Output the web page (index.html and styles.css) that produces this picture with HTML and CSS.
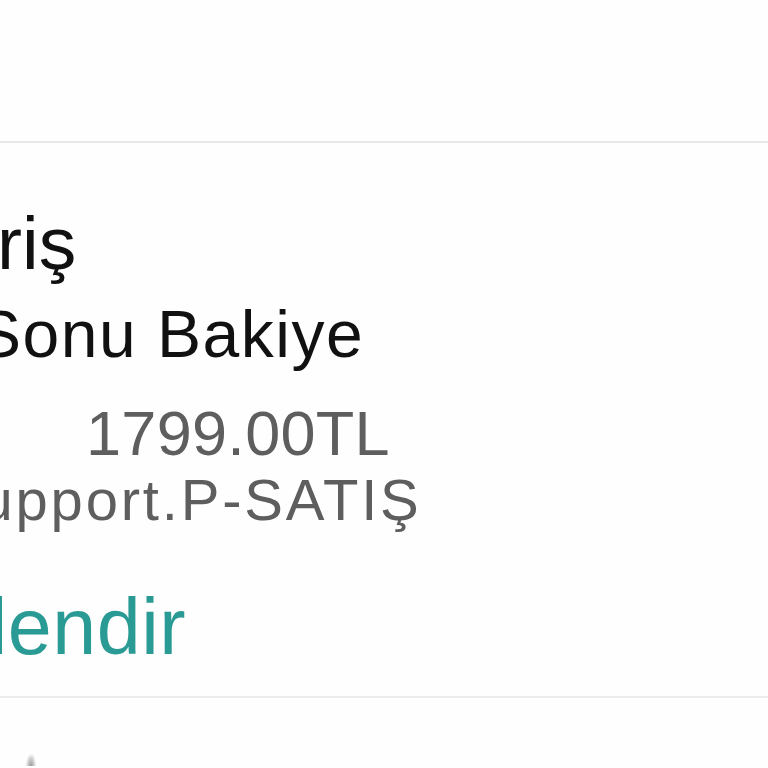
FILE: index.html
```html
<!DOCTYPE html>
<html lang="tr">
<head>
<meta charset="utf-8">
<link rel="stylesheet" href="styles.css">
</head>
<body>
<div class="screen">
  <div class="header"></div>
  <div class="card">
    <div class="title">Giriş</div>
    <div class="label">Dönem Sonu Bakiye</div>
    <div class="value">1799.00TL</div>
    <div class="meta">Support.P-SATIŞ</div>
    <div class="link">Bilgilendir</div>
  </div>
  <div class="next">
    <span class="peek"></span>
  </div>
</div>
</body>
</html>
```
FILE: styles.css
```css
html, body {
  margin: 0;
  padding: 0;
  background: #fefefe;
}
body {
  width: 768px;
  height: 768px;
  overflow: hidden;
  font-family: "Liberation Sans", Arial, sans-serif;
}
.screen {
  width: 768px;
  overflow: hidden;
}
.header {
  height: 141px;
  border-bottom: 2px solid #e8e8e8;
}
.card {
  padding-top: 51px;
  padding-bottom: 24px;
  border-bottom: 2px solid #ececec;
  white-space: nowrap;
}
.title {
  font-size: 75px;
  line-height: 98px;
  color: #111;
  margin-left: -78px;
}
.label {
  font-size: 66px;
  line-height: 85px;
  color: #111;
  margin-left: -263px;
  letter-spacing: 1.5px;
}
.value {
  font-size: 63px;
  line-height: 80px;
  margin-top: 16px;
  color: #5e5e5e;
  margin-left: 86px;
  letter-spacing: 0.3px;
}
.meta {
  font-size: 58px;
  line-height: 53px;
  color: #5e5e5e;
  margin-left: -61px;
  letter-spacing: 2.8px;
}
.link {
  font-size: 79px;
  line-height: 90px;
  margin-top: 56px;
  color: #2a9a94;
  margin-left: -162px;
  letter-spacing: 0.5px;
}
.next {
  padding-top: 56px;
  padding-left: 26px;
}
.peek {
  display: block;
  width: 10px;
  height: 12px;
  background: radial-gradient(ellipse at 50% 100%, #9a9a9a 0%, #d0d0d0 45%, rgba(255,255,255,0) 75%);
}
```
